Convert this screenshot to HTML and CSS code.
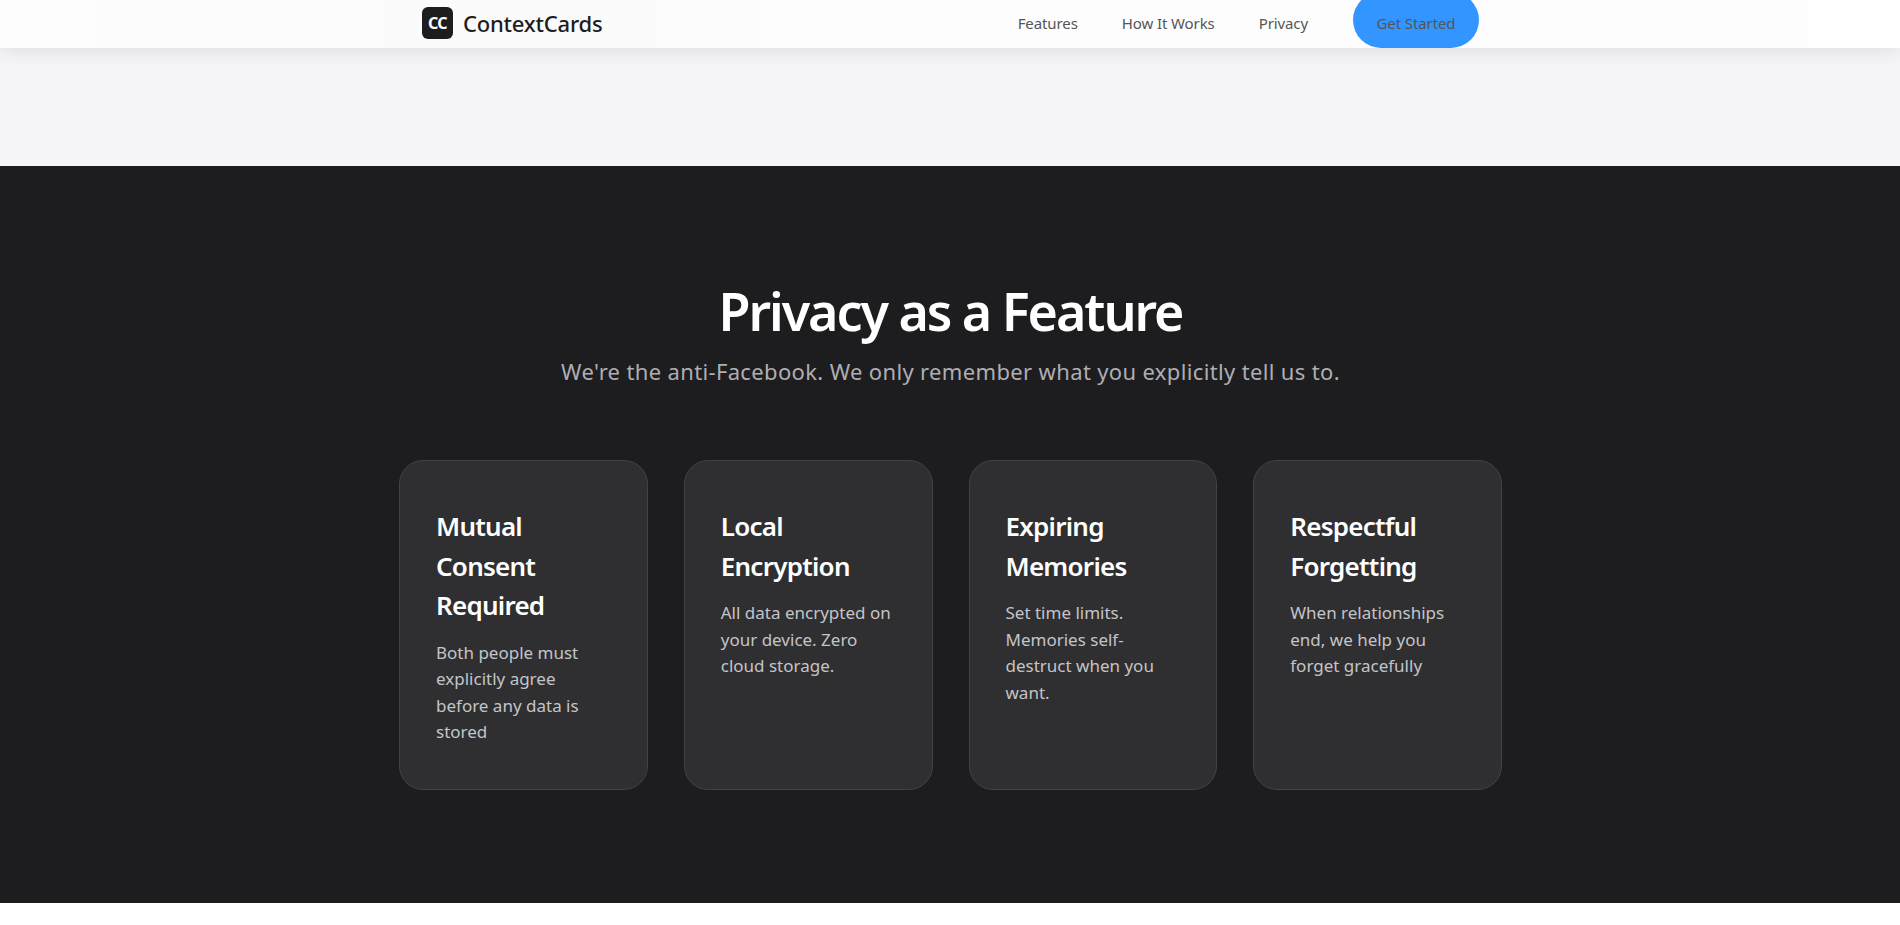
FILE: index.html
```html
<!DOCTYPE html>
<html lang="en">
<head>
<meta charset="utf-8">
<title>ContextCards</title>
<link rel="stylesheet" href="styles.css">
</head>
<body>
<header class="nav">
  <div class="nav-inner">
    <a class="brand" href="#"><span class="brand-mark">CC</span><span class="brand-name">ContextCards</span></a>
    <nav class="nav-links">
      <a href="#">Features</a>
      <a href="#">How It Works</a>
      <a href="#">Privacy</a>
      <a class="cta" href="#">Get Started</a>
    </nav>
  </div>
</header>
<div class="top-gap"></div>
<section class="privacy">
  <h2>Privacy as a Feature</h2>
  <p class="lead">We're the anti-Facebook. We only remember what you explicitly tell us to.</p>
  <div class="cards">
    <article class="card">
      <h3>Mutual Consent Required</h3>
      <p>Both people must explicitly agree before any data is stored</p>
    </article>
    <article class="card">
      <h3>Local Encryption</h3>
      <p>All data encrypted on your device. Zero cloud storage.</p>
    </article>
    <article class="card">
      <h3>Expiring Memories</h3>
      <p>Set time limits. Memories self-destruct when you want.</p>
    </article>
    <article class="card">
      <h3>Respectful Forgetting</h3>
      <p>When relationships end, we help you forget gracefully</p>
    </article>
  </div>
</section>
</body>
</html>
```
FILE: styles.css
```css
* { box-sizing: border-box; }
html, body { margin: 0; padding: 0; }
body {
  background: #fff;
  font-family: "Noto Sans", "Open Sans", sans-serif;
  height: 925px;
  overflow: hidden;
}
a { text-decoration: none; color: inherit; }

.nav {
  position: relative;
  z-index: 2;
  height: 48px;
  background: linear-gradient(90deg, #fdfdfd 0, #fbfbfb 22%, #fafafa 30%, #fdfdfd 42%, #fefefe 100%);
  box-shadow: 0 2px 20px rgba(0, 0, 0, 0.1);
}
.nav-inner {
  height: 48px;
  margin: 0 421px 0 422px;
  display: flex;
  justify-content: space-between;
  align-items: flex-end;
}
.brand {
  display: flex;
  align-items: center;
  gap: 10px;
  height: 46px;
  margin-bottom: 2px;
  color: #1d1d1f;
}
.brand-mark {
  width: 31px;
  height: 32px;
  border-radius: 6px;
  background: #1d1d1f;
  color: #fff;
  font-size: 16px;
  font-weight: 700;
  letter-spacing: -0.5px;
  display: flex;
  align-items: center;
  justify-content: center;
}
.brand-name { font-size: 22px; font-weight: 500; letter-spacing: -0.2px; }
.nav-links {
  display: flex;
  align-items: flex-end;
  gap: 44px;
  height: 48px;
  font-size: 15px;
  letter-spacing: -0.1px;
  color: #555;
}
.nav-links a:not(.cta) { line-height: 46px; margin-bottom: 2px; }
.cta {
  width: 126px;
  height: 56px;
  border-radius: 28px;
  background: #3395ff;
  display: flex;
  align-items: center;
  justify-content: center;
  padding-top: 6px;
  margin-left: 1px;
  flex: none;
}

.top-gap { height: 118px; background: #f5f5f7; }

.privacy {
  height: 737px;
  background: #1d1d1f;
  padding: 116px 0 0 1px;
  text-align: center;
}
.privacy h2 {
  margin: 0;
  font-size: 52px;
  line-height: 58px;
  font-weight: 600;
  letter-spacing: -2.05px;
  color: #fff;
}
.lead {
  margin: 15px 0 0;
  font-size: 22px;
  line-height: 1.5;
  letter-spacing: 0.35px;
  color: #aeaeb3;
}
.cards {
  margin: 72px 398px 0;
  display: grid;
  grid-template-columns: repeat(4, 1fr);
  gap: 36px;
  text-align: left;
}
.card {
  height: 330px;
  padding: 46px 36px 36px;
  background: #2f2f31;
  border: 1px solid #424245;
  border-radius: 24px;
}
.card h3 {
  margin: 0 0 14px;
  font-size: 26px;
  line-height: 39.5px;
  font-weight: 600;
  letter-spacing: -0.75px;
  color: #fff;
}
.card p {
  margin: 0;
  font-size: 17px;
  line-height: 26.5px;
  color: #c4c4c8;
}
```
